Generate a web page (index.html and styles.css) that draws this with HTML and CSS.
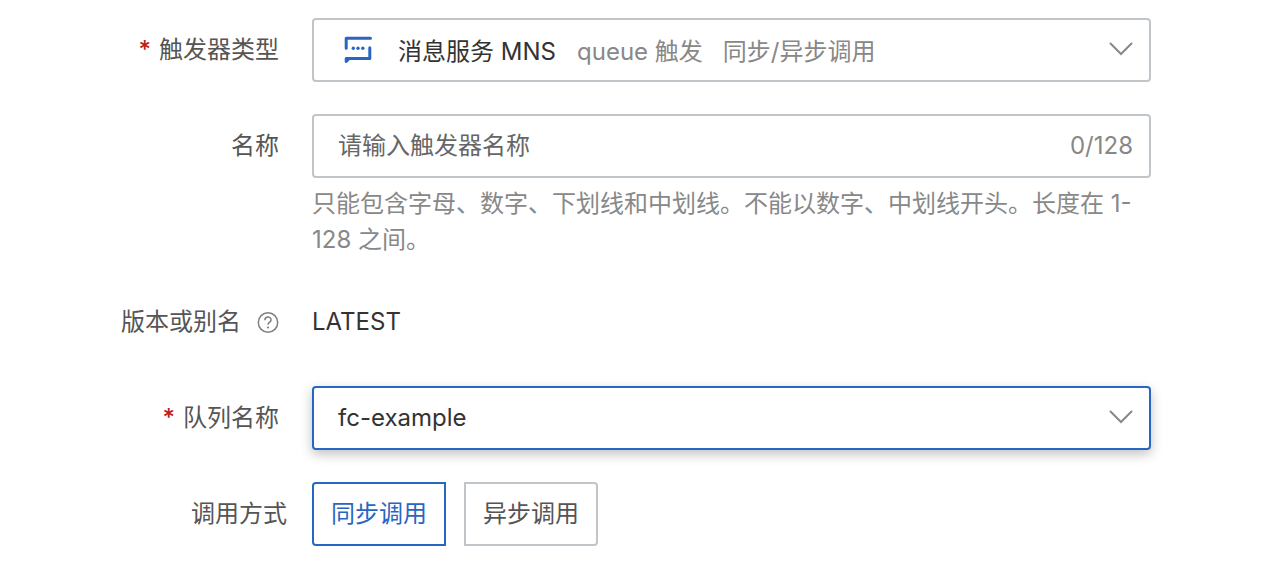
FILE: index.html
```html
<!DOCTYPE html>
<html lang="zh-CN">
<head>
<meta charset="utf-8">
<meta name="viewport" content="width=device-width, initial-scale=1">
<title>触发器</title>
<link rel="stylesheet" href="styles.css">
</head>
<body>
<form class="form">
  <div class="row">
    <label class="label" for="type"><span class="required">*</span>触发器类型</label>
    <div class="control">
      <select class="box select select-service" id="type">
        <option>消息服务 MNS</option>
      </select>
      <div class="service">
        <svg class="service-icon" viewBox="0 0 28 28" aria-hidden="true">
          <path d="M2.200 12.300V2.200H26.500M25.800 11.800V22.500H2.200V25.500L5 22.500" fill="none" stroke="currentColor" stroke-width="3" stroke-linecap="round" stroke-linejoin="round"/>
          <g fill="currentColor"><circle cx="9.300" cy="12.300" r="1.700"/><circle cx="14" cy="12.300" r="1.700"/><circle cx="18.800" cy="12.300" r="1.700"/></g>
        </svg>
        <span class="note">queue 触发</span>
        <span class="note">同步/异步调用</span>
      </div>
      <svg class="chevron" viewBox="0 0 24 16" aria-hidden="true"><path d="M1.500 1.500L12 12L22.500 1.500"/></svg>
    </div>
  </div>

  <div class="row">
    <label class="label" for="name">名称</label>
    <div class="field">
      <div class="box input-box">
        <input class="input" id="name" type="text" maxlength="128" placeholder="请输入触发器名称">
        <span class="count">0/128</span>
      </div>
      <p class="help">只能包含字母、数字、下划线和中划线。不能以数字、中划线开头。长度在 1-<wbr>128 之间。</p>
    </div>
  </div>

  <div class="row">
    <div class="label">版本或别名
      <svg class="help-icon" viewBox="0 0 22 22" aria-hidden="true">
        <circle cx="11" cy="11.500" r="9.700"/>
        <path d="M7.900 9.300C7.900 4.900 14.100 5.100 14.100 8.900C14.100 11.200 11 11.200 11 13.800"/>
        <circle class="dot" cx="11" cy="16.500" r="1.100"/>
      </svg>
    </div>
    <div class="value">LATEST</div>
  </div>

  <div class="row">
    <label class="label" for="queue"><span class="required">*</span>队列名称</label>
    <div class="control">
      <select class="box select active" id="queue">
        <option>fc-example</option>
      </select>
      <svg class="chevron" viewBox="0 0 24 16" aria-hidden="true"><path d="M1.500 1.500L12 12L22.500 1.500"/></svg>
    </div>
  </div>

  <div class="row">
    <div class="label label-wide" id="mode-label">调用方式</div>
    <div class="modes" role="radiogroup" aria-labelledby="mode-label">
      <label class="mode"><input class="mode-input" type="radio" name="mode" checked>同步调用</label>
      <label class="mode"><input class="mode-input" type="radio" name="mode">异步调用</label>
    </div>
  </div>
</form>
</body>
</html>
```
FILE: styles.css
```css
* {
  box-sizing: border-box;
}

body {
  margin: 0;
  background: #fff;
  color: #555;
  font: 24px/36px Inter, "Noto Sans CJK SC", sans-serif;
}

.form {
  display: grid;
  gap: 32px;
  padding: 18px 113px 22px 0;
}

.row {
  display: grid;
  grid-template-columns: 279px minmax(0, 1fr);
  column-gap: 33px;
}

.label {
  display: flex;
  align-items: center;
  justify-content: flex-end;
  height: 64px;
  white-space: nowrap;
}

.label-wide {
  margin-right: -8px;
}

.required {
  margin-right: 8px;
  color: #b8201a;
  font-weight: 500;
}

.help-icon {
  width: 22px;
  height: 22px;
  margin-left: 16px;
  fill: none;
  overflow: visible;
  stroke: #808080;
  stroke-width: 1.5;
}

.help-icon .dot {
  fill: #808080;
  stroke: none;
}

.control {
  display: grid;
  align-items: center;
}

.control > * {
  grid-area: 1 / 1;
}

.box {
  width: 100%;
  height: 64px;
  border: 2px solid #c0c5c9;
  border-radius: 4px;
  background: #fff;
}

.select {
  padding: 0 64px 0 24px;
  appearance: none;
  color: #333;
  font: inherit;
  outline: none;
}

.select-service {
  padding-top: 3px;
  padding-left: 84px;
}

.active {
  border-color: #2866c2;
  box-shadow: 0 4px 12px rgba(0, 0, 0, 0.25);
}

.service {
  display: grid;
  grid-template-columns: 233px auto auto;
  align-items: center;
  justify-content: start;
  column-gap: 20px;
  padding-left: 12px;
  pointer-events: none;
}

.service-icon {
  width: 28px;
  height: 28px;
  margin-left: 20px;
  color: #2866c2;
}

.note,
.count,
.help {
  color: #888;
}

.note {
  padding-top: 3px;
}

.chevron {
  justify-self: end;
  width: 24px;
  height: 16px;
  margin-right: 18px;
  fill: none;
  stroke: #888;
  stroke-width: 2;
  stroke-linecap: round;
  pointer-events: none;
}

.input-box {
  display: flex;
  align-items: center;
  padding: 0 16px 0 24px;
}

.input {
  flex: 1;
  min-width: 0;
  padding: 0;
  border: 0;
  outline: none;
  background: none;
  color: #333;
  font: inherit;
}

.input::placeholder {
  color: #666;
  opacity: 1;
}

.help {
  margin: 8px 0 0;
}

.value {
  align-self: center;
  color: #333;
}

.modes {
  display: flex;
  gap: 18px;
}

.mode {
  display: flex;
  align-items: center;
  justify-content: center;
  height: 64px;
  padding: 0 17px;
  border: 2px solid #c0c5c9;
}

.mode:first-child {
  border-radius: 4px 0 0 4px;
}

.mode:last-child {
  border-radius: 0 4px 4px 0;
}

.mode:has(:checked) {
  border-color: #2866c2;
  color: #2866c2;
}

.mode-input {
  width: 0;
  height: 0;
  margin: 0;
  appearance: none;
}
```
